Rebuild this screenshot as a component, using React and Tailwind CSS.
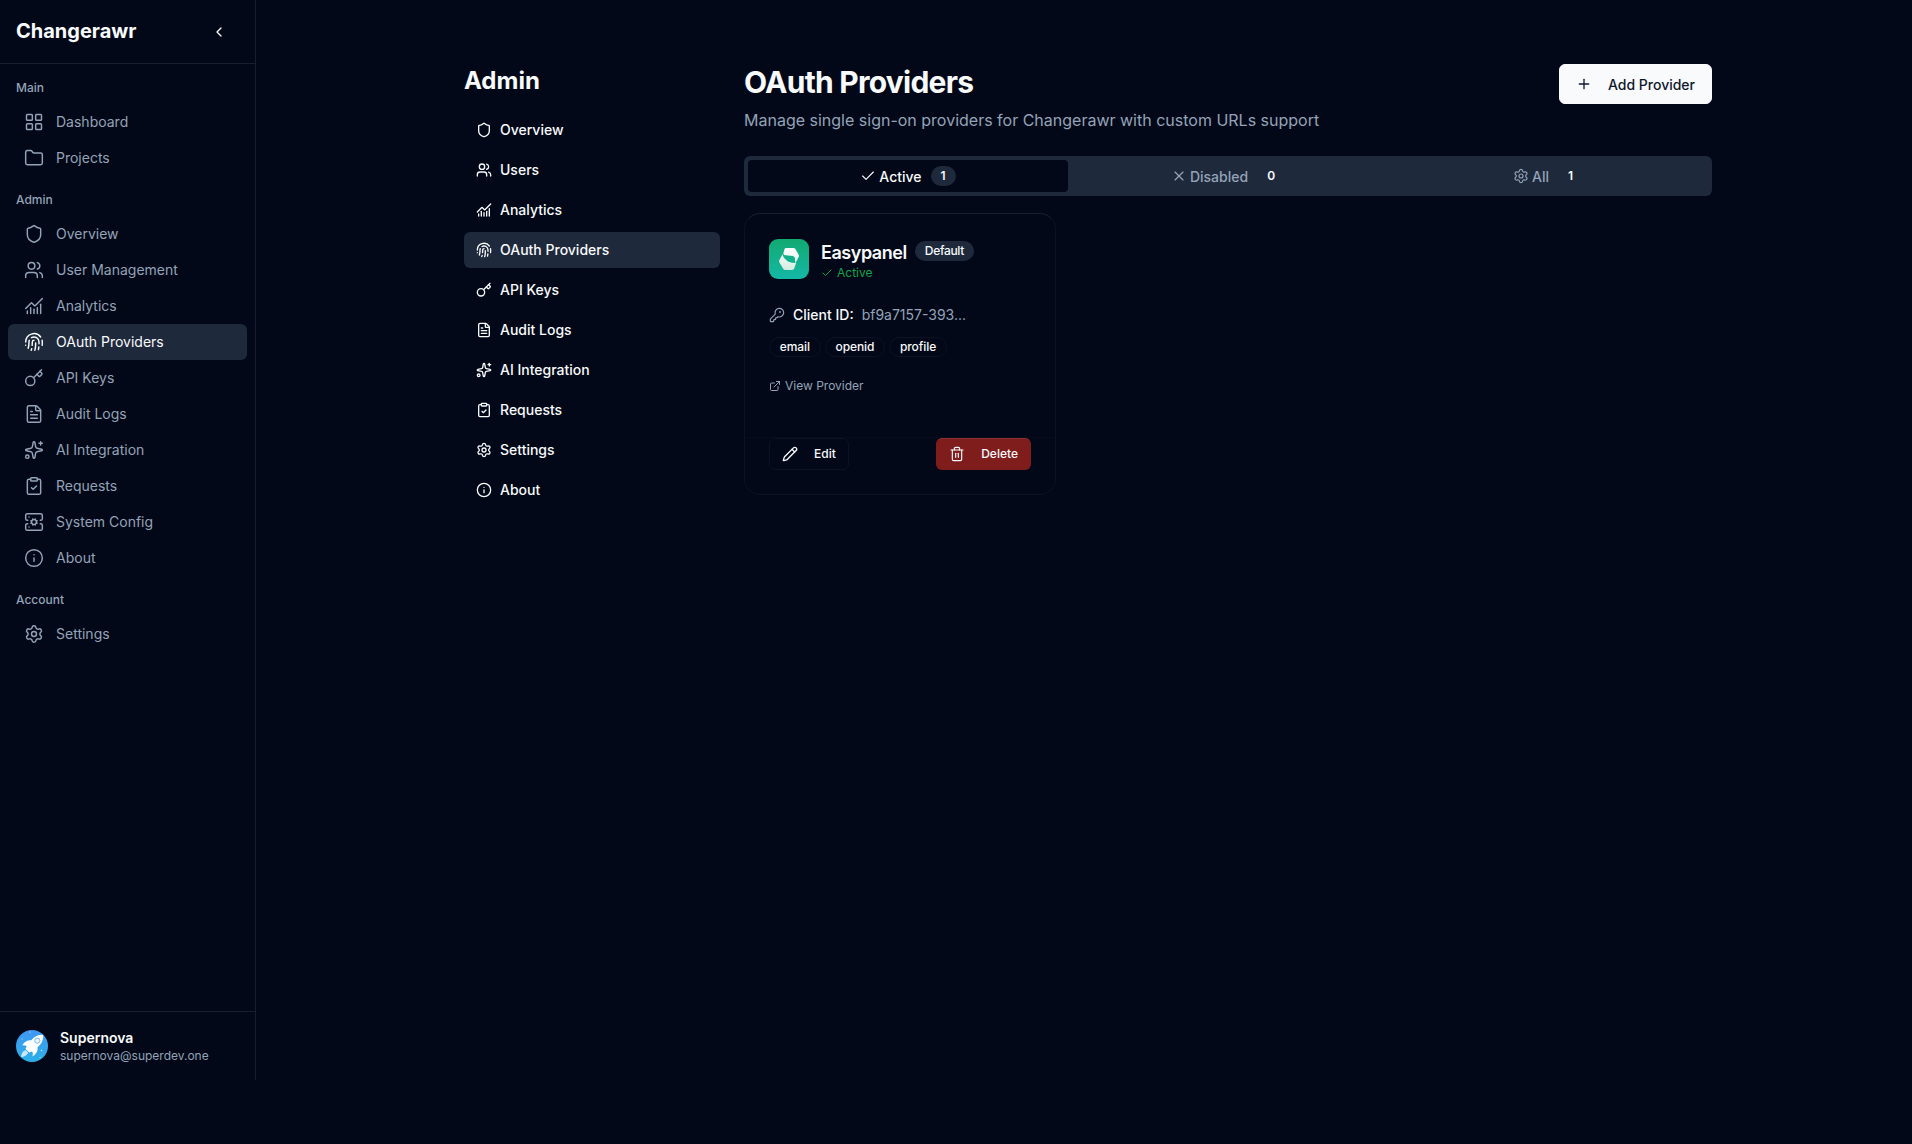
import React from "react";
import {
  LayoutGrid, Folder, Shield, Users, ChartNoAxesCombined, Fingerprint, Key, FileText, Sparkles,
  ClipboardCheck, ServerCog, Info, Settings, ChevronLeft, Plus, Check, X, KeyRound, ExternalLink, Pencil, Trash2,
} from "lucide-react";

const sections = [
  { title: "Main", items: [["Dashboard", LayoutGrid], ["Projects", Folder]] },
  {
    title: "Admin",
    items: [
      ["Overview", Shield], ["User Management", Users], ["Analytics", ChartNoAxesCombined],
      ["OAuth Providers", Fingerprint], ["API Keys", Key], ["Audit Logs", FileText],
      ["AI Integration", Sparkles], ["Requests", ClipboardCheck], ["System Config", ServerCog], ["About", Info],
    ],
  },
  { title: "Account", items: [["Settings", Settings]] },
];

const adminNav = [
  ["Overview", Shield], ["Users", Users], ["Analytics", ChartNoAxesCombined], ["OAuth Providers", Fingerprint],
  ["API Keys", Key], ["Audit Logs", FileText], ["AI Integration", Sparkles], ["Requests", ClipboardCheck],
  ["Settings", Settings], ["About", Info],
];

function Avatar() {
  return (
    <svg className="size-8 shrink-0" viewBox="0 0 32 32">
      <defs>
        <linearGradient id="sky" x1="0" y1="0" x2="0" y2="1">
          <stop offset="0" stopColor="#3f97f2" />
          <stop offset="1" stopColor="#2bb0e8" />
        </linearGradient>
      </defs>
      <circle cx="16" cy="16" r="16" fill="url(#sky)" />
      <path d="M27.2 4.8c-4.600-.2-8.800 1.500-11.900 5.500-3.300-.4-6.600.8-9.100 4.900 1.700-.2 3.200 0 4.500.7l-1.100 3 3.600 3.600 2.900-1c.8 1.400.9 3 .4 5 4-2.300 5.400-5.800 5.100-9.400 4.200-2.900 5.900-7.400 5.600-12.300z" fill="#fff" />
      <circle cx="21.3" cy="10.7" r="2.6" fill="#eaf4fd" stroke="#6fb4ee" strokeWidth="0.9" />
      <path d="M5 27c.3-3.200 1.700-5.500 4.600-6.900l2.600 2.600c-1.300 2.600-3.600 4.200-7.200 4.300z" fill="#c9e6fb" />
      <circle cx="14" cy="2" r=".6" fill="#fff" />
      <circle cx="6" cy="9" r=".5" fill="#cfe8fc" />
      <circle cx="25.5" cy="20.5" r=".7" fill="#dff0fd" />
      <circle cx="24" cy="27.5" r=".5" fill="#cfe8fc" />
    </svg>
  );
}

function EasypanelLogo() {
  return (
    <svg className="size-10 shrink-0" viewBox="0 0 40 40">
      <defs>
        <linearGradient id="tile" x1="0" y1="0" x2="0" y2="1">
          <stop offset="0" stopColor="#12a971" />
          <stop offset="1" stopColor="#14b8a6" />
        </linearGradient>
        <linearGradient id="mark" gradientUnits="userSpaceOnUse" x1="0" y1="9" x2="0" y2="31">
          <stop offset="0" stopColor="#ffffff" />
          <stop offset="1" stopColor="#d3ece0" />
        </linearGradient>
      </defs>
      <rect width="40" height="40" rx="9" fill="url(#tile)" />
      <path d="M17 9h7.500c.8 0 1.500.4 1.900 1.100l3.300 5.600c.4.700.4 1.500 0 2.200l-2.900 5.500-.8.300L26 19.600c-.4-1.400-1.200-2.200-2.600-2.500l-8.600-1.200-.4-1.900 1.200-4.100c.3-.6.800-.9 1.400-.9z" fill="url(#mark)" />
      <path d="M13.600 15.200c.4 1.900 1.100 3.500 3 5.400 1.800 1.800 3.900 2.900 6.300 3.100l4.200.2-1.900 5.700c-.4.900-1.100 1.400-2.100 1.400h-6.900c-.8 0-1.500-.4-1.900-1.100l-4-6.600c-.4-.7-.4-1.400 0-2.100z" fill="url(#mark)" />
    </svg>
  );
}

function Tab({ icon: Icon, label, count, active }) {
  return (
    <div className={active
      ? "flex h-8 items-center justify-center rounded-sm bg-[#020817] text-sm font-medium text-[#f8fafc]"
      : "flex h-8 items-center justify-center rounded-sm text-sm font-medium text-[#94a3b8]"}>
      <Icon className="mr-[3px] size-4" strokeWidth={1.75} />
      <span className="pt-px">{label}</span>
      <span className={active
        ? "ml-[9px] rounded-full bg-[#1e293b] px-2.5 py-0.5 text-xs font-semibold text-[#f8fafc]"
        : "ml-[9px] rounded-full px-2.5 py-0.5 text-xs font-semibold text-[#f8fafc]"}>{count}</span>
    </div>
  );
}

function ProviderCard() {
  return (
    <div className="rounded-2xl border border-[#0b1222] border-t-[#172033]">
      <div className="px-6 pt-[25px]">
        <div className="flex h-10 items-center gap-3">
          <EasypanelLogo />
          <div className="pt-0.5">
            <div className="flex items-center gap-2">
              <h3 className="pt-px text-lg leading-6 font-semibold tracking-tight">Easypanel</h3>
              <span className="mb-0.5 rounded-full bg-[#1e293b] px-2.5 py-0.5 text-xs font-medium tracking-tight">Default</span>
            </div>
            <div className="flex items-center gap-1 text-xs text-[#16a34a]">
              <Check className="size-3" />
              Active
            </div>
          </div>
        </div>
      </div>
      <div className="px-6 pt-[26px]">
        <div className="flex items-center gap-2 text-sm">
          <KeyRound className="size-4 text-[#94a3b8]" strokeWidth={1.75} />
          <span className="font-medium">Client ID:</span>
          <span className="text-[#94a3b8]">bf9a7157-393...</span>
        </div>
        <div className="mt-3 flex gap-1">
          {["email", "openid", "profile"].map((s) => (
            <span key={s} className="rounded-full border border-[#0b1222] px-[9.75px] py-px text-xs font-medium tracking-[-0.006em]">{s}</span>
          ))}
        </div>
        <div className="mt-[21px] flex items-center gap-1 text-xs text-[#94a3b8]">
          <ExternalLink className="size-3" />
          View Provider
        </div>
      </div>
      <div className="mt-[43px] flex justify-between border-t border-[#060c1c] px-6 pb-6">
        <button className="flex h-8 items-center gap-4 rounded-md border border-[#0b1222] px-3 text-xs font-medium">
          <Pencil className="size-4" />
          Edit
        </button>
        <button className="flex h-8 items-center gap-4 rounded-md border border-[#7f1d1d] border-t-[#8f3033] bg-[#7f1d1d] px-3 text-xs font-medium">
          <Trash2 className="size-4" strokeWidth={1.75} />
          Delete
        </button>
      </div>
    </div>
  );
}

export default function App() {
  return (
    <div className="flex min-h-screen bg-[#020817] font-['Inter',sans-serif] text-[#f8fafc]">
      <aside className="flex h-[1080px] w-64 shrink-0 flex-col border-r border-[#161e30]">
        <div className="flex h-16 items-center justify-between border-b border-[#161e30] px-4">
          <span className="pb-0.5 text-xl font-bold">Changerawr</span>
          <ChevronLeft className="mr-3 size-4" />
        </div>
        <nav className="flex flex-1 flex-col gap-4 px-2 pt-4">
          {sections.map((s) => (
            <div key={s.title}>
              <h2 className="mb-2 px-2 text-xs font-medium text-[#94a3b8]">{s.title}</h2>
              {s.items.map(([label, Icon]) => (
                <a key={label} className={label === "OAuth Providers"
                  ? "flex h-9 items-center gap-3 rounded-md bg-[#1e293b] px-4 text-sm"
                  : "flex h-9 items-center gap-3 rounded-md px-4 text-sm text-[#94a3b8]"}>
                  <Icon className="size-5" strokeWidth={1.75} />
                  {label}
                </a>
              ))}
            </div>
          ))}
        </nav>
        <div className="flex items-center gap-3 border-t border-[#161e30] p-4">
          <Avatar />
          <div>
            <div className="text-sm font-semibold">Supernova</div>
            <div className="text-xs text-[#94a3b8]">supernova@superdev.one</div>
          </div>
        </div>
      </aside>

      <main className="ml-52 flex w-[1248px] gap-6 pt-16">
        <div className="w-64 shrink-0">
          <h2 className="mb-[15px] pt-px text-2xl font-bold">Admin</h2>
          <nav className="flex flex-col gap-1">
            {adminNav.map(([label, Icon]) => (
              <a key={label} className={label === "OAuth Providers"
                ? "flex h-9 items-center gap-2 rounded-md bg-[#1e293b] px-3 text-sm font-medium"
                : "flex h-9 items-center gap-2 rounded-md px-3 text-sm font-medium"}>
                <Icon className="size-4" />
                {label}
              </a>
            ))}
          </nav>
        </div>

        <div className="flex-1">
          <header className="flex items-start justify-between">
            <div>
              <h1 className="text-3xl font-bold tracking-tight">OAuth Providers</h1>
              <p className="mt-2 text-[#94a3b8]">Manage single sign-on providers for Changerawr with custom URLs support</p>
            </div>
            <button className="flex h-10 items-center gap-4 rounded-md border border-[#f8fafc] bg-[#f8fafc] px-4 text-sm font-medium text-[#0f172a]">
              <Plus className="size-4" />
              <span className="pt-px">Add Provider</span>
            </button>
          </header>
          <div className="mt-6 grid h-10 grid-cols-3 rounded-md bg-[#1e293b] p-1">
            <Tab icon={Check} label="Active" count={1} active />
            <Tab icon={X} label="Disabled" count={0} />
            <Tab icon={Settings} label="All" count={1} />
          </div>
          <div className="mt-[17px] grid grid-cols-3 gap-4">
            <ProviderCard />
          </div>
        </div>
      </main>
    </div>
  );
}
